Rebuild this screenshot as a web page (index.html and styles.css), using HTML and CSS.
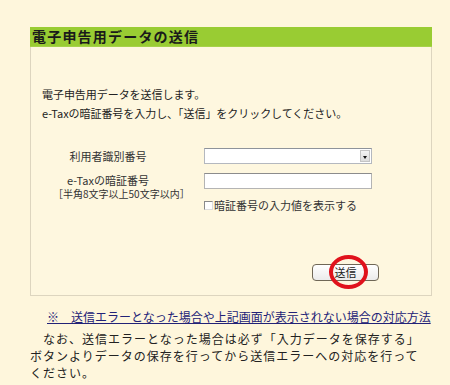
FILE: index.html
```html
<!DOCTYPE html>
<html lang="ja">
<head>
<meta charset="utf-8">
<link rel="stylesheet" href="styles.css">
</head>
<body>
<div class="page">
  <div class="panel">
    <div class="panel-head">電子申告用データの送信</div>
    <div class="panel-body">
      <p class="intro">電子申告用データを送信します。<br>e-Taxの暗証番号を入力し、「送信」をクリックしてください。</p>
      <div class="form">
        <div class="label">利用者識別番号</div>
        <div class="field">
          <div class="select"><span class="arrow"></span></div>
        </div>
        <div class="label-two">
          <div class="main">e-Taxの暗証番号</div>
          <div class="sub">［半角8文字以上50文字以内］</div>
        </div>
        <div class="field">
          <div class="input"></div>
          <div class="check"><span class="box"></span><span>暗証番号の入力値を表示する</span></div>
        </div>
      </div>
      <div class="actions">
        <div class="btn-wrap">
          <button class="send" type="button">送信</button>
          <span class="circle"></span>
        </div>
      </div>
    </div>
  </div>
  <p class="link"><a href="#">※　送信エラーとなった場合や上記画面が表示されない場合の対応方法</a></p>
  <p class="note">　なお、送信エラーとなった場合は必ず「入力データを保存する」<br>ボタンよりデータの保存を行ってから送信エラーへの対応を行って<br>ください。</p>
</div>
</body>
</html>
```

FILE: styles.css
```css
html, body {
  margin: 0;
  padding: 0;
  background: #fef6dc;
}
body {
  font-family: "Noto Sans CJK JP", "Noto Sans", sans-serif;
  color: #222;
}
.page {
  padding: 27px 0 0 30px;
  width: 402px;
}
.panel {
  width: 402px;
  box-sizing: border-box;
  border: 1px solid #ddd5bf;
  border-top: none;
  background: #fef7df;
}
.panel-head {
  margin: 0 -1px;
  height: 19px;
  background: #99cc33;
  border-bottom: 1px solid #a6d24a;
  font-size: 14px;
  line-height: 19px;
  font-weight: bold;
  letter-spacing: 1.2px;
  color: #1a1a1a;
  padding-left: 2px;
}
.panel-body {
  padding: 38px 0 14px 0;
}
.intro {
  margin: 0 0 0 11px;
  font-size: 11px;
  line-height: 19px;
  letter-spacing: -0.05px;
  color: #222;
}
.form {
  margin-top: 25px;
  display: grid;
  grid-template-columns: 154px 168px;
  column-gap: 19px;
  row-gap: 9px;
}
.label {
  font-size: 11px;
  line-height: 16px;
  text-align: center;
  color: #333;
}
.label-two {
  font-size: 11px;
  line-height: 14px;
  color: #333;
}
.label-two .main {
  text-align: center;
}
.label-two .sub {
  font-size: 10px;
  white-space: nowrap;
  text-align: left;
  padding-left: 22px;
}
.field {
  display: flex;
  flex-direction: column;
}
.select {
  height: 16px;
  box-sizing: border-box;
  border: 1px solid #b4b8bf;
  border-top-color: #8e939a;
  background: #fff;
  display: flex;
  justify-content: flex-end;
  padding: 1px;
}
.arrow {
  width: 10px;
  background: linear-gradient(#f4f4f4, #dcdcdc);
  border: 1px solid #c4c4c4;
  box-sizing: border-box;
  position: relative;
}
.arrow::after {
  content: "";
  position: absolute;
  left: 2px;
  top: 5px;
  border-left: 2px solid transparent;
  border-right: 2px solid transparent;
  border-top: 3px solid #111;
}
.input {
  height: 16px;
  box-sizing: border-box;
  border: 1px solid #b4b4b4;
  border-top-color: #8c8c8c;
  background: #fff;
}
.check {
  margin-top: 10px;
  display: flex;
  align-items: center;
  font-size: 11px;
  line-height: 13px;
  color: #333;
}
.box {
  width: 7px;
  height: 7px;
  border: 1px solid #8a8a8a;
  border-right-color: #ddd;
  border-bottom-color: #ddd;
  background: #fff;
  margin-right: 1px;
}
.actions {
  margin-top: 52px;
  display: flex;
  justify-content: flex-end;
  padding-right: 52px;
}
.btn-wrap {
  position: relative;
  display: flex;
}
.send {
  width: 67px;
  height: 17px;
  padding: 0;
  border: 1px solid #6f6756;
  border-radius: 4px;
  background: linear-gradient(#ffffff, #ebebeb);
  font-family: "Noto Sans CJK JP", sans-serif;
  font-size: 11px;
  line-height: 15px;
  color: #222;
}
.circle {
  position: absolute;
  left: 17px;
  top: -9px;
  width: 39px;
  height: 34px;
  box-sizing: border-box;
  border: 4px solid #e0121c;
  border-radius: 50%;
}
.link {
  margin: 13px 0 0 17px;
  font-size: 12px;
  line-height: 16px;
  white-space: nowrap;
}
.link a {
  color: #222277;
  text-decoration: underline;
}
.note {
  margin: 5px 0 0 0;
  font-size: 12px;
  letter-spacing: 1px;
  line-height: 17px;
  color: #222;
  white-space: nowrap;
}
```
